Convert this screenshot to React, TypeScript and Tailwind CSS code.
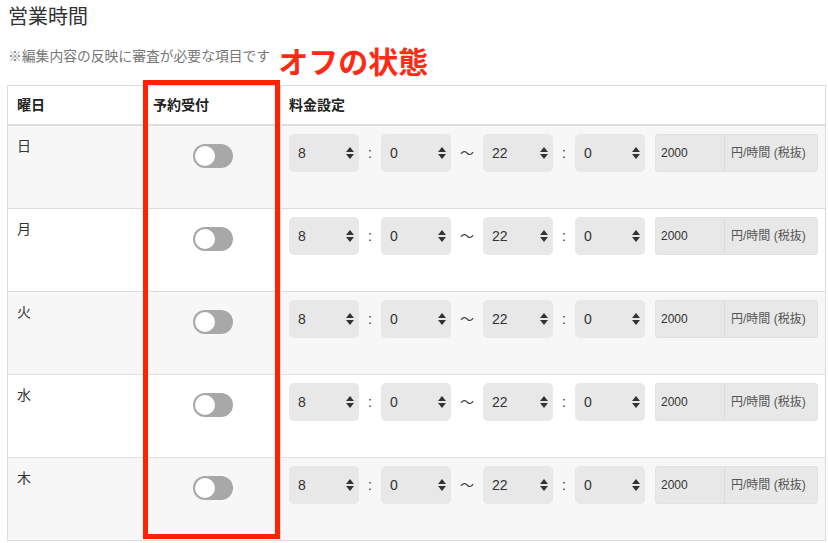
import React from "react";

const days = ["日", "月", "火", "水", "木"];

function Arrows() {
  return (
    <svg width="8" height="12" viewBox="0 0 8 12" className="shrink-0">
      <path d="M4 0 L8 5 H0 Z" fill="#333" />
      <path d="M0 7 H8 L4 12 Z" fill="#333" />
    </svg>
  );
}

function Select({ value }: { value: string }) {
  return (
    <div className="w-[70px] h-[38px] rounded-[5px] bg-[#e8e8e8] flex items-center justify-between pl-[9px] pr-[5px] text-[14px] text-[#333]">
      <span>{value}</span>
      <Arrows />
    </div>
  );
}

function Toggle() {
  return (
    <div className="w-[40px] h-[24px] rounded-full bg-[#a8a8a8] flex items-center pl-[2px]">
      <div className="w-[20px] h-[20px] rounded-full bg-white" />
    </div>
  );
}

export default function App() {
  return (
    <main
      className="relative w-[828px] h-[543px] overflow-hidden bg-white text-[#333]"
      style={{ fontFamily: '"Liberation Sans", "Noto Sans CJK JP", sans-serif' }}
    >
      <h1 className="pt-[5px] px-[8px] text-[20px] leading-[24px] font-normal">営業時間</h1>

      <div className="flex items-start px-[8px] mt-[12px] h-[40px] gap-[8px]">
        <p className="mt-[6px] text-[13.8px] leading-[20px] text-[#777]">※編集内容の反映に審査が必要な項目です</p>
        <span className="mt-[4px] text-[30px] leading-[36px] font-bold text-[#ff2a14]">オフの状態</span>
      </div>

      <div className="mt-[4px] ml-[7px] w-[819px] border-t border-l border-r border-[#ddd]">
        <div className="grid grid-cols-[137px_136px_1fr] h-[40px] border-b-2 border-[#ddd] text-[14px] font-bold text-[#222]">
          <div className="flex items-center pl-[9px] border-r border-[#ddd]">曜日</div>
          <div className="flex items-center pl-[8px] border-r border-[#ddd]">予約受付</div>
          <div className="flex items-center pl-[8px]">料金設定</div>
        </div>

        {days.map((d, i) => (
          <div
            key={d}
            className={
              "grid grid-cols-[137px_136px_1fr] h-[83px] border-b border-[#ddd] " +
              (i % 2 === 0 ? "bg-[#f7f7f7]" : "bg-white")
            }
          >
            <div className="pl-[9px] pt-[10px] text-[14px] leading-[21px] border-r border-[#ddd]">{d}</div>
            <div className="flex justify-center pt-[18px] border-r border-[#ddd]">
              <Toggle />
            </div>
            <div className="flex items-start pl-[8px] pt-[8px]">
              <Select value="8" />
              <div className="w-[22px] h-[38px] flex items-center justify-center text-[14px]">:</div>
              <Select value="0" />
              <div className="w-[32px] h-[38px] flex items-center justify-center text-[14px] text-[#444]">〜</div>
              <Select value="22" />
              <div className="w-[22px] h-[38px] flex items-center justify-center text-[14px]">:</div>
              <Select value="0" />
              <div className="ml-[10px] flex h-[38px] rounded-[3px] bg-[#e8e8e8] border border-[#e2e2e2] text-[12px] text-[#333]">
                <div className="w-[68px] flex items-center pl-[5px]">2000</div>
                <div className="w-[93px] flex items-center pl-[6px] border-l border-[#dcdcdc] text-[#555]">円/時間 (税抜)</div>
              </div>
            </div>
          </div>
        ))}
      </div>

      <div className="absolute left-[143px] top-[80px] w-[137px] h-[459px] border-[5px] border-[#ff2200]" />
    </main>
  );
}
